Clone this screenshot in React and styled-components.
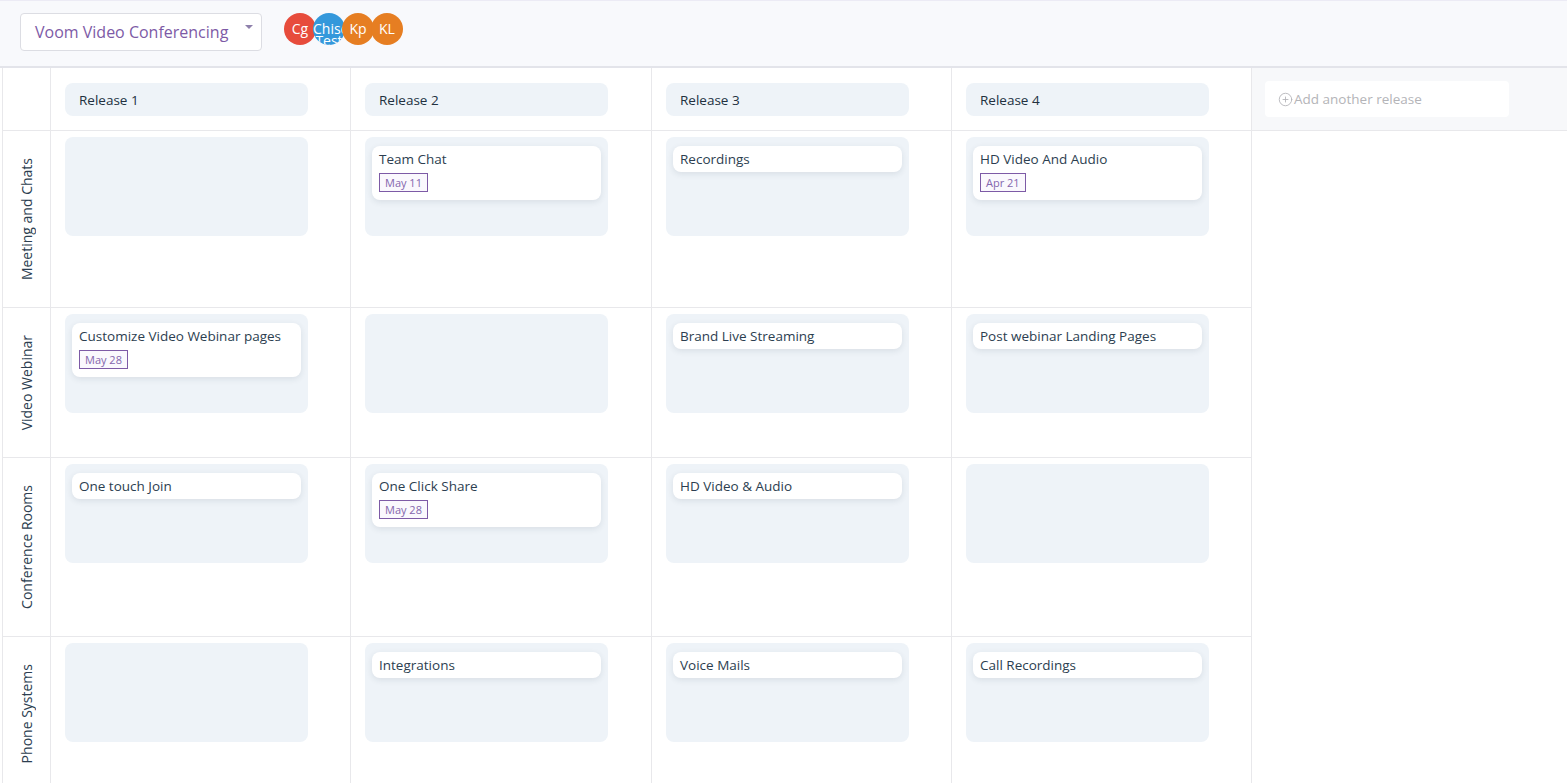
import React from "react";
import styled, { createGlobalStyle } from "styled-components";
import { CirclePlus } from "lucide-react";

const releases = ["Release 1", "Release 2", "Release 3", "Release 4"];

const rows = [
  {
    name: "Meeting and Chats",
    cards: [null, { title: "Team Chat", date: "May 11" }, { title: "Recordings" }, { title: "HD Video And Audio", date: "Apr 21" }],
  },
  {
    name: "Video Webinar",
    cards: [{ title: "Customize Video Webinar pages", date: "May 28" }, null, { title: "Brand Live Streaming" }, { title: "Post webinar Landing Pages" }],
  },
  {
    name: "Conference Rooms",
    cards: [{ title: "One touch Join" }, { title: "One Click Share", date: "May 28" }, { title: "HD Video & Audio" }, null],
  },
  {
    name: "Phone Systems",
    cards: [null, { title: "Integrations" }, { title: "Voice Mails" }, { title: "Call Recordings" }],
  },
];

const people = [
  { initials: "Cg", color: "#e74c3c" },
  { initials: "Chise Test", color: "#3498db" },
  { initials: "Kp", color: "#e67e22" },
  { initials: "KL", color: "#e67e22" },
];

const App = () => {
  return (
    <>
      <GlobalStyle />
      <TopBar>
        <ProductSelect>
          Voom Video Conferencing
          <Caret />
        </ProductSelect>
        <Avatars>
          {people.map(p => (
            <Avatar key={p.initials} color={p.color} title={p.initials}>{p.initials}</Avatar>
          ))}
        </Avatars>
      </TopBar>

      <Board>
        <Corner />
        {releases.map(r => (
          <HeadCell key={r}>
            <ReleasePill>{r}</ReleasePill>
          </HeadCell>
        ))}
        <AddCell>
          <AddButton>
            <CirclePlus size={15} strokeWidth={1.4} />
            Add another release
          </AddButton>
        </AddCell>

        {rows.map(row => (
          <React.Fragment key={row.name}>
            <LabelCell>
              <LabelText>{row.name}</LabelText>
            </LabelCell>
            {row.cards.map((card, i) => (
              <Cell key={i}>
                <Lane>
                  {card && (
                    <Card>
                      <CardTitle>{card.title}</CardTitle>
                      {card.date && <DateTag>{card.date}</DateTag>}
                    </Card>
                  )}
                </Lane>
              </Cell>
            ))}
            <Filler />
          </React.Fragment>
        ))}
      </Board>
    </>
  );
};

export default App;

const GlobalStyle = createGlobalStyle`
  body {
    margin: 0;
    background: #ffffff;
    font-family: "Open Sans", "Liberation Sans", sans-serif;
    color: #2c3e50;
  }
`;

const TopBar = styled.div`
  height: 68px;
  display: flex;
  align-items: flex-start;
  padding: 12px 0 0 20px;
  box-sizing: border-box;
  background: #f8f9fc;
  border-top: 1px solid #ecebf5;
  border-bottom: 2px solid #e3e4ea;
`;

const ProductSelect = styled.div`
  position: relative;
  width: 242px;
  height: 38px;
  box-sizing: border-box;
  padding-left: 14px;
  display: flex;
  align-items: center;
  background: #ffffff;
  border: 1px solid #dcdde3;
  border-radius: 4px;
  color: #7d5aa6;
  font-size: 16px;
`;

const Caret = styled.span`
  position: absolute;
  right: 8px;
  top: 11px;
  border-left: 4px solid transparent;
  border-right: 4px solid transparent;
  border-top: 4px solid #8e80ab;
`;

const Avatars = styled.div`
  display: flex;
  margin-left: 22px;
`;

const Avatar = styled.div`
  width: 32px;
  height: 32px;
  box-sizing: border-box;
  border-radius: 50%;
  overflow: hidden;
  background: ${p => p.color};
  color: #ffffff;
  font-size: 14px;
  line-height: 12px;
  padding-top: 10px;
  text-align: center;
  & + & {
    margin-left: -3px;
  }
`;

const Board = styled.div`
  display: grid;
  grid-template-columns: 49px 300px 301px 300px 300px 1fr;
  margin-left: 2px;
`;

const Corner = styled.div`
  border-left: 1px solid #e8e8eb;
  border-right: 1px solid #e8e8eb;
  border-bottom: 1px solid #e8e8eb;
`;

const HeadCell = styled.div`
  padding: 15px 14px 14px;
  border-right: 1px solid #e8e8eb;
  border-bottom: 1px solid #e8e8eb;
`;

const ReleasePill = styled.div`
  width: 243px;
  height: 33px;
  box-sizing: border-box;
  padding-left: 14px;
  display: flex;
  align-items: center;
  background: #eef3f8;
  border-radius: 8px;
  font-size: 13.5px;
  font-weight: 500;
  color: #22313f;
`;

const AddCell = styled.div`
  padding: 13px;
  background: #f7f8fa;
  border-bottom: 1px solid #e8e8eb;
`;

const AddButton = styled.div`
  width: 244px;
  height: 36px;
  box-sizing: border-box;
  padding-left: 13px;
  display: flex;
  align-items: center;
  gap: 1px;
  background: #ffffff;
  border-radius: 4px;
  color: #b4b4b8;
  font-size: 13.5px;
`;

const LabelCell = styled.div`
  display: flex;
  justify-content: center;
  padding: 27px 0;
  min-height: 150px;
  box-sizing: border-box;
  border-left: 1px solid #e8e8eb;
  border-right: 1px solid #e8e8eb;
  border-bottom: 1px solid #e8e8eb;
`;

const LabelText = styled.div`
  writing-mode: vertical-rl;
  transform: rotate(180deg);
  font-size: 14px;
  color: #2c3e50;
  white-space: nowrap;
`;

const Cell = styled.div`
  padding: 6px 14px 7px;
  border-right: 1px solid #e8e8eb;
  border-bottom: 1px solid #e8e8eb;
`;

const Filler = styled.div``;

const Lane = styled.div`
  width: 243px;
  height: 99px;
  box-sizing: border-box;
  padding: 9px 7px;
  background: #eef3f8;
  border-radius: 8px;
`;

const Card = styled.div`
  display: flex;
  flex-direction: column;
  align-items: flex-start;
  padding: 5px 7px;
  background: #ffffff;
  border-radius: 8px;
  box-shadow: 0 2px 6px rgba(30, 45, 70, 0.1);
`;

const CardTitle = styled.div`
  font-size: 13.5px;
  line-height: 16px;
  color: #2c3e50;
`;

const DateTag = styled.div`
  margin: 6px 0 3px;
  height: 19px;
  box-sizing: border-box;
  padding: 0 5px;
  display: flex;
  align-items: center;
  border: 1px solid #7d5aa6;
  background: #faf8fd;
  color: #8466ad;
  font-size: 11px;
`;
